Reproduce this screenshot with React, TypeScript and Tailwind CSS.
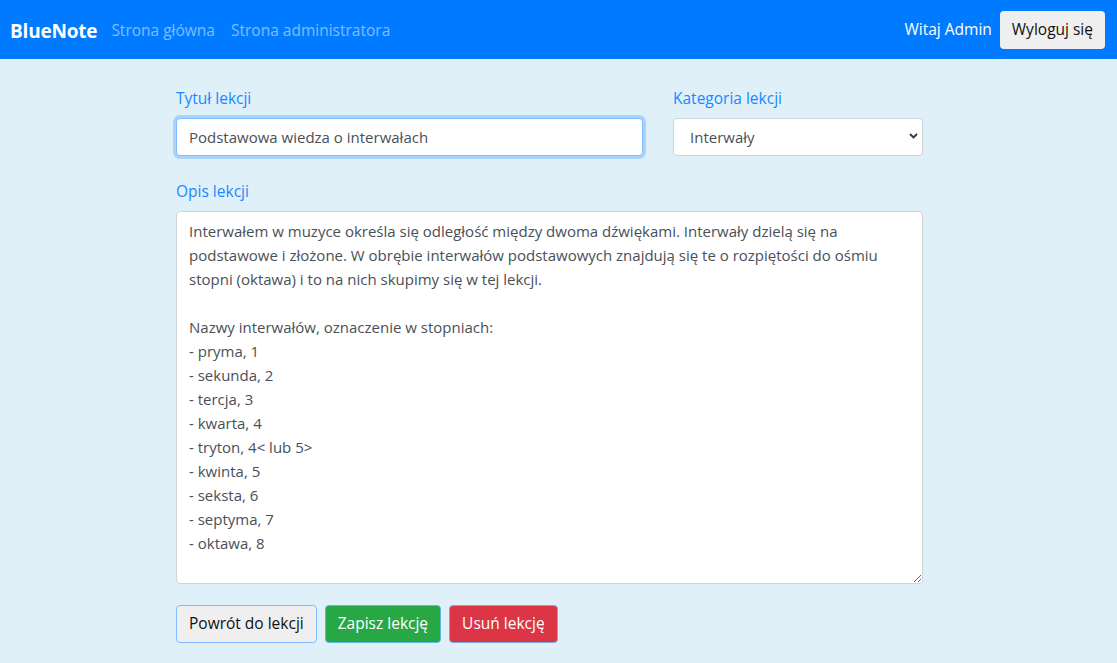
const font = { fontFamily: '"Open Sans", "Noto Sans", Arial, sans-serif' }

const description = `Interwałem w muzyce określa się odległość między dwoma dźwiękami. Interwały dzielą się na
podstawowe i złożone. W obrębie interwałów podstawowych znajdują się te o rozpiętości do ośmiu
stopni (oktawa) i to na nich skupimy się w tej lekcji.

Nazwy interwałów, oznaczenie w stopniach:
- pryma, 1
- sekunda, 2
- tercja, 3
- kwarta, 4
- tryton, 4< lub 5>
- kwinta, 5
- seksta, 6
- septyma, 7
- oktawa, 8`

export default function App() {
  return (
    <div className="min-h-[663px] bg-[#e0f0f9] font-['Open_Sans',sans-serif]">
      <nav className="h-[59px] bg-[#007bff] flex items-center justify-between pl-[10px] pr-[12px] pt-[3px]">
        <div className="flex items-center">
          <a className="text-white font-bold text-[19px] mr-[6px] tracking-[-0.2px]">BlueNote</a>
          <a className="text-white/50 text-[15.5px] px-2">Strona główna</a>
          <a className="text-white/50 text-[15.5px] px-2">Strona administratora</a>
        </div>
        <div className="flex items-center gap-2 -mt-[3px]">
          <span className="text-white text-[15.5px] pt-[1px]">Witaj Admin</span>
          <button className="h-[38px] px-3 rounded bg-[#efefef] text-[#111] text-[15.5px]">Wyloguj się</button>
        </div>
      </nav>

      <div className="w-[747px] ml-[176px] pt-[28px]">
        <div className="flex gap-[30px]">
          <div className="w-[467px]">
            <label className="block text-[#1a88ff] text-[15.5px] mb-[8px]">Tytuł lekcji</label>
            <input
              className="w-full h-[38px] px-3 bg-white border border-[#80bdff] rounded outline-none shadow-[0_0_0_3px_rgba(0,123,255,0.25)] text-[#495057] text-[15px]"
              defaultValue="Podstawowa wiedza o interwałach"
              style={font}
            />
          </div>
          <div className="w-[250px]">
            <label className="block text-[#1a88ff] text-[15.5px] mb-[8px]">Kategoria lekcji</label>
            <div className="relative">
              <select
                className="w-full h-[38px] pl-4 pr-8 appearance-none bg-white border border-[#ced4da] rounded text-[#495057] text-[15px] outline-none"
                style={font}
              >
                <option>Interwały</option>
              </select>
              <svg className="absolute right-[5px] top-[15px] pointer-events-none" width="9" height="6" viewBox="0 0 9 6">
                <path d="M1 1l3.5 3.5L8 1" stroke="#333" strokeWidth="1.8" fill="none" />
              </svg>
            </div>
          </div>
        </div>

        <div className="mt-[24px]">
          <label className="block text-[#1a88ff] text-[15.5px] mb-[7px]">Opis lekcji</label>
          <textarea
            className="block w-full h-[373px] px-3 py-[7px] bg-white border border-[#ced4da] rounded text-[#495057] text-[15px] leading-[24px] outline-none whitespace-pre"
            defaultValue={description}
            style={font}
          />
        </div>

        <div className="flex gap-2 mt-[21px]">
          <button className="h-[38px] px-3 rounded bg-[#efefef] border border-[#80bdff] text-[#111] text-[15.5px]">Powrót do lekcji</button>
          <button className="h-[38px] px-3 rounded bg-[#28a745] border border-[#5cb8e6] text-white text-[15.5px]">Zapisz lekcję</button>
          <button className="h-[38px] px-3 rounded bg-[#dc3545] border border-[#7aa9e0] text-white text-[15.5px]">Usuń lekcję</button>
        </div>
      </div>
    </div>
  )
}
